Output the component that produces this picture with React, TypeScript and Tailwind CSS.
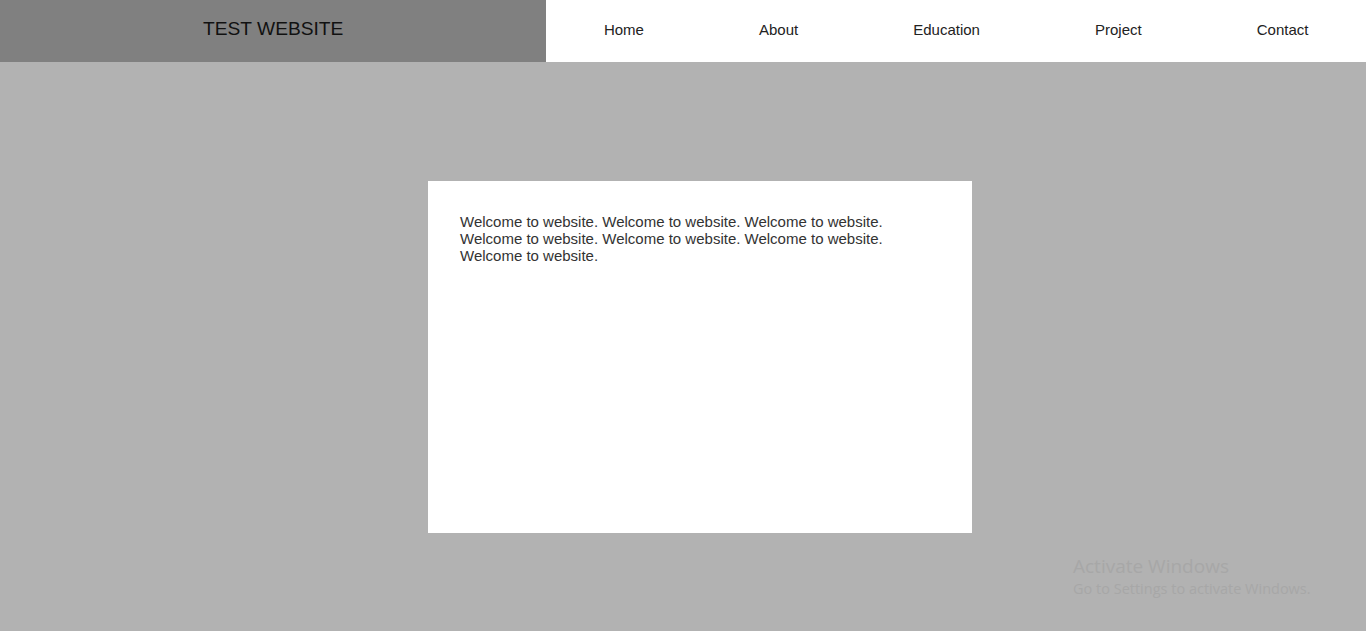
export default function App() {
  const nav = ["Home", "About", "Education", "Project", "Contact"];
  const text = Array(7).fill("Welcome to website.").join(" ");
  return (
    <div className="relative min-h-[631px] bg-[#b2b2b2]" style={{ fontFamily: '"Liberation Sans", Arial, sans-serif' }}>
      <header className="flex h-[62px]">
        <div className="flex w-[40%] items-center justify-center bg-[#808080] pb-[4px] text-[19.2px] text-[#111]">
          TEST WEBSITE
        </div>
        <nav className="flex w-[60%] items-center justify-around bg-white pb-[2px] text-[15px] text-[#222]">
          {nav.map((n) => (
            <span key={n}>{n}</span>
          ))}
        </nav>
      </header>
      <main className="flex justify-center pt-[119px]">
        <div className="ml-[34px] h-[352px] w-[544px] bg-white px-[32px] py-[32px]">
          <p className="w-[440px] text-[15px] leading-[17px] text-[#333]">{text}</p>
        </div>
      </main>
      <div className="absolute left-[1073px] top-[553px] text-[#a7a7a7]" style={{ fontFamily: '"Open Sans", "Noto Sans", sans-serif' }}>
        <div className="text-[19px] leading-[26px]">Activate Windows</div>
        <div className="text-[14.5px] leading-[19px]">Go to Settings to activate Windows.</div>
      </div>
    </div>
  );
}
